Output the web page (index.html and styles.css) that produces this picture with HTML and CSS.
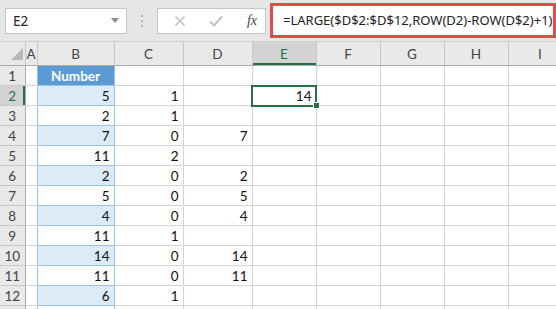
FILE: index.html
```html
<!DOCTYPE html>
<html>
<head>
  <title>LARGE formula</title>
  <link rel="stylesheet" href="styles.css">
</head>
<body>
  <div class="toolbar">
    <div class="namebox">
      <span>E2</span>
      <svg class="caret" width="8" height="5" viewBox="0 0 8 5"><path d="M0 0h8L4 5z" fill="#8a8a8a"/></svg>
    </div>
    <div class="grip">
      <svg width="3" height="12" viewBox="0 0 3 12"><rect x="0" y="0" width="2" height="2" fill="#b5b5b5"/><rect x="0" y="5" width="2" height="2" fill="#b5b5b5"/><rect x="0" y="10" width="2" height="2" fill="#b5b5b5"/></svg>
    </div>
    <div class="fxbox">
      <svg width="12" height="12" viewBox="0 0 12 12"><path d="M1.5 1.5l9 9M10.5 1.5l-9 9" stroke="#c2c2c2" stroke-width="1.6"/></svg>
      <svg width="14" height="12" viewBox="0 0 14 12"><path d="M1 6.5l4 4L13 1.5" stroke="#c2c2c2" stroke-width="2" fill="none"/></svg>
      <span class="fx">fx</span>
    </div>
    <div class="formula">=LARGE($D$2:$D$12,ROW(D2)-ROW(D$2)+1)</div>
  </div>

  <table class="sheet">
    <colgroup>
      <col style="width:25px"><col style="width:12px"><col style="width:77px"><col style="width:69px"><col style="width:69px">
      <col style="width:64px"><col style="width:64px"><col style="width:64px"><col style="width:64px"><col style="width:64px">
    </colgroup>
    <tr class="head">
      <th class="corner"><svg width="12" height="12" viewBox="0 0 12 12"><path d="M12 0v12H0z" fill="#b8b8b8"/></svg></th>
      <th>A</th><th>B</th><th>C</th><th>D</th><th class="cur">E</th><th>F</th><th>G</th><th>H</th><th>I</th>
    </tr>
    <tr><th class="rh">1</th><td class="a"></td><td class="title">Number</td><td></td><td></td><td></td><td></td><td></td><td></td><td></td></tr>
    <tr><th class="rh cur">2</th><td class="a"></td><td class="b band">5</td><td>1</td><td></td><td class="sel">14<span class="handle"></span></td><td></td><td></td><td></td><td></td></tr>
    <tr><th class="rh">3</th><td class="a"></td><td class="b">2</td><td>1</td><td></td><td></td><td></td><td></td><td></td><td></td></tr>
    <tr><th class="rh">4</th><td class="a"></td><td class="b band">7</td><td>0</td><td>7</td><td></td><td></td><td></td><td></td><td></td></tr>
    <tr><th class="rh">5</th><td class="a"></td><td class="b">11</td><td>2</td><td></td><td></td><td></td><td></td><td></td><td></td></tr>
    <tr><th class="rh">6</th><td class="a"></td><td class="b band">2</td><td>0</td><td>2</td><td></td><td></td><td></td><td></td><td></td></tr>
    <tr><th class="rh">7</th><td class="a"></td><td class="b">5</td><td>0</td><td>5</td><td></td><td></td><td></td><td></td><td></td></tr>
    <tr><th class="rh">8</th><td class="a"></td><td class="b band">4</td><td>0</td><td>4</td><td></td><td></td><td></td><td></td><td></td></tr>
    <tr><th class="rh">9</th><td class="a"></td><td class="b">11</td><td>1</td><td></td><td></td><td></td><td></td><td></td><td></td></tr>
    <tr><th class="rh">10</th><td class="a"></td><td class="b band">14</td><td>0</td><td>14</td><td></td><td></td><td></td><td></td><td></td></tr>
    <tr><th class="rh">11</th><td class="a"></td><td class="b">11</td><td>0</td><td>11</td><td></td><td></td><td></td><td></td><td></td></tr>
    <tr><th class="rh">12</th><td class="a"></td><td class="b band">6</td><td>1</td><td></td><td></td><td></td><td></td><td></td><td></td></tr>
    <tr><th class="rh"></th><td class="a"></td><td class="b"></td><td></td><td></td><td></td><td></td><td></td><td></td><td></td></tr>
  </table>
</body>
</html>
```

FILE: styles.css
```css
body {
  margin: 0;
  padding: 0;
  background: #fff;
  font-family: Lato, "Liberation Sans", sans-serif;
  overflow: hidden;
  width: 556px;
  height: 309px;
}

.toolbar {
  display: flex;
  align-items: center;
  height: 42px;
  background: #e6e6e6;
  padding-left: 5px;
  box-sizing: border-box;
  border-bottom: 1px solid #d0d0d0;
}

.namebox {
  display: flex;
  align-items: center;
  justify-content: space-between;
  width: 122px;
  height: 26px;
  box-sizing: border-box;
  background: #fff;
  border: 1px solid #c6c6c6;
  padding: 0 7px 0 7px;
  font-family: "Noto Sans", sans-serif;
  font-size: 13.5px;
  color: #222;
}

.grip {
  width: 30px;
  display: flex;
  justify-content: center;
}

.fxbox {
  display: flex;
  align-items: center;
  justify-content: space-between;
  width: 109px;
  height: 26px;
  box-sizing: border-box;
  background: #fff;
  border: 1px solid #c6c6c6;
  padding: 0 8px 0 16px;
}

.fx {
  font-family: "Liberation Serif", serif;
  font-style: italic;
  font-size: 14px;
  color: #444;
}

.formula {
  flex: 1;
  margin-left: 4px;
  height: 35px;
  box-sizing: border-box;
  background: #fff;
  border: 3px solid #e8484b;
  padding-left: 10px;
  font-family: "Noto Sans", sans-serif;
  font-size: 13px;
  line-height: 29px;
  color: #222;
  white-space: nowrap;
  overflow: hidden;
}

.sheet {
  border-collapse: collapse;
  table-layout: fixed;
  width: 572px;
  font-size: 13.5px;
  line-height: 16px;
  color: #111;
}

.sheet tr {
  height: 20px;
}

.sheet td, .sheet th {
  border: 1px solid #d4d4d4;
  height: 19px;
  padding: 0 4px 0 0;
  text-align: right;
  overflow: hidden;
  white-space: nowrap;
}

.sheet tr.head {
  height: 22px;
}

.head th {
  height: 21px;
  background: #e9e9e9;
  border-color: #c8c8c8;
  border-top: none;
  border-bottom-color: #ababab;
  text-align: center;
  padding: 0;
  font-weight: normal;
  color: #444;
}

.head th.cur {
  background: #d3d3d3;
  color: #217346;
  box-shadow: inset 0 -2px 0 #217346;
}

.head th.corner {
  text-align: right;
  vertical-align: bottom;
  padding: 0 2px 2px 0;
  border-left: none;
}

th.rh {
  background: #e9e9e9;
  border-color: #c8c8c8;
  border-left: none;
  border-right-color: #ababab;
  text-align: center;
  padding: 0;
  font-weight: normal;
  color: #444;
}

th.rh.cur {
  background: #d3d3d3;
  color: #217346;
  box-shadow: inset -2px 0 0 #217346;
}

.sheet td.a {
  border-right-color: #9bc2e6;
}

.sheet td.b {
  border-color: #9bc2e6;
}

.sheet td.band {
  background: #ddebf7;
}

.sheet td.title {
  background: #5b9bd5;
  color: #fff;
  font-weight: bold;
  text-align: center;
  padding: 0;
  border-color: #9bc2e6;
}

.sheet td.sel {
  position: relative;
  outline: 2px solid #217346;
  outline-offset: -1px;
  overflow: visible;
}

.handle {
  position: absolute;
  right: -4px;
  bottom: -4px;
  width: 5px;
  height: 5px;
  background: #217346;
  border: 1px solid #fff;
}
```
